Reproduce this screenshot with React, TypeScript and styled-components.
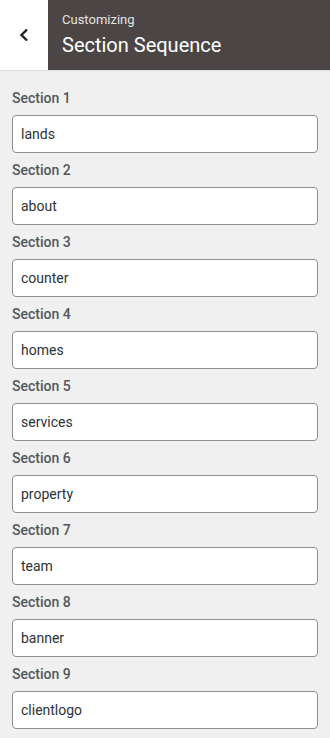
import React from "react";
import styled, { createGlobalStyle } from "styled-components";

const GlobalStyle = createGlobalStyle`
  html, body { margin: 0; padding: 0; background: #f0f0f1; }
  body { font-family: Roboto, "Noto Sans", "Liberation Sans", sans-serif; }
  * { box-sizing: border-box; }
`;

const Page = styled.div`
  width: 330px;
  min-height: 738px;
  background: #f0f0f1;
`;

const Header = styled.header`
  display: flex;
  height: 71px;
  border-bottom: 1px solid #dcdcde;
`;

const BackButton = styled.button`
  width: 48px;
  height: 70px;
  border: none;
  background: #fff;
  display: flex;
  align-items: center;
  justify-content: center;
  padding: 0 0 1px 0;
  cursor: pointer;
`;

const TitleBlock = styled.div`
  flex: 1;
  background: #4b4645;
  padding: 11px 14px 0;
  display: flex;
  flex-direction: column;
`;

const Eyebrow = styled.span`
  font-size: 13px;
  line-height: 17px;
  color: #e4e2e1;
`;

const Title = styled.h1`
  margin: 4px 0 0;
  font-size: 20px;
  line-height: 26px;
  font-weight: 400;
  color: #ffffff;
`;

const List = styled.div`
  padding: 17px 12px 0;
  display: flex;
  flex-direction: column;
  gap: 7px;
`;

const Field = styled.label`
  display: flex;
  flex-direction: column;
  gap: 6px;
`;

const FieldLabel = styled.span`
  font-size: 14px;
  line-height: 21px;
  font-weight: 500;
  color: #50575e;
`;

const Input = styled.input`
  height: 38px;
  width: 100%;
  border: 1px solid #8c8f94;
  border-radius: 4px;
  background: #fff;
  padding: 0 8px;
  font-family: inherit;
  font-size: 14px;
  color: #2c3338;
  outline: none;
`;

const sections = [
  "lands",
  "about",
  "counter",
  "homes",
  "services",
  "property",
  "team",
  "banner",
  "clientlogo",
];

export default function App() {
  return (
    <Page>
      <GlobalStyle />
      <Header>
        <BackButton aria-label="Back">
          <svg width="12" height="14" viewBox="0 0 12 14">
            <path
              d="M9 1.5 L3.5 7 L9 12.5"
              fill="none"
              stroke="#1d2327"
              strokeWidth="2.4"
              strokeLinecap="butt"
              strokeLinejoin="miter"
            />
          </svg>
        </BackButton>
        <TitleBlock>
          <Eyebrow>Customizing</Eyebrow>
          <Title>Section Sequence</Title>
        </TitleBlock>
      </Header>
      <List>
        {sections.map((s, i) => (
          <Field key={s}>
            <FieldLabel>Section {i + 1}</FieldLabel>
            <Input defaultValue={s} />
          </Field>
        ))}
      </List>
    </Page>
  );
}
